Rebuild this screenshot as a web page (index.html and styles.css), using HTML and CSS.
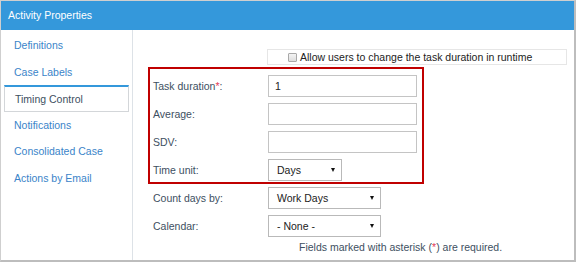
FILE: index.html
```html
<!DOCTYPE html>
<html>

<head>
    <title>Activity Properties</title>
    <meta charset="utf-8">
    <link rel="stylesheet" href="styles.css">
</head>

<body>
    <div class="panel">
        <header class="kop">Activity Properties</header>
        <div class="krop">
            <nav class="menu">
                <a href="#">Definitions</a>
                <a href="#">Case Labels</a>
                <a href="#" class="valgt">Timing Control</a>
                <a href="#">Notifications</a>
                <a href="#">Consolidated Case</a>
                <a href="#">Actions by Email</a>
            </nav>

            <section class="indhold">
                <label class="tjek">
                    <span class="boks"></span>
                    Allow users to change the task duration in runtime
                </label>

                <div class="formular">
                    <span class="etiket">Task duration<em>*</em>:</span>
                    <div class="felt">1</div>

                    <span class="etiket">Average:</span>
                    <div class="felt"></div>

                    <span class="etiket">SDV:</span>
                    <div class="felt"></div>

                    <span class="etiket">Time unit:</span>
                    <div class="valg kort"><span>Days</span><i class="pil"></i></div>

                    <span class="etiket">Count days by:</span>
                    <div class="valg"><span>Work Days</span><i class="pil"></i></div>

                    <span class="etiket">Calendar:</span>
                    <div class="valg"><span>- None -</span><i class="pil"></i></div>
                </div>

                <p class="note">Fields marked with asterisk (<em>*</em>) are required.</p>

                <!-- rød markering oven på timing felterne -->
                <div class="markering"></div>
            </section>
        </div>
    </div>
</body>

</html>
```

FILE: styles.css
```css
body {
    margin: 0;
    background-color: white;
    font-family: "Liberation Sans", Arial, sans-serif;
    font-size: 10.5px;
    color: #3d4f61;
}

.panel {
    width: 576px;
    height: 262px;
    box-sizing: border-box;
    border: 1px solid #cfcfcf;
    border-right: 2px solid #bdbdbd;
    border-bottom: 2px solid #bdbdbd;
    display: flex;
    flex-direction: column;
}

.kop {
    height: 29px;
    line-height: 29px;
    padding-left: 7px;
    background-color: #3498db;
    color: white;
    font-size: 10.5px;
}

.krop {
    flex: 1;
    display: flex;
}

.menu {
    width: 131px;
    border-right: 1px solid #dde2e7;
    padding-top: 2px;
    display: flex;
    flex-direction: column;
}

.menu a {
    height: 26.6px;
    line-height: 26.6px;
    padding-left: 13px;
    color: #3a84c9;
    text-decoration: none;
}

.menu a.valgt {
    box-sizing: border-box;
    margin: 0 3px;
    padding-left: 10px;
    line-height: 24px;
    border: 1px solid #d3d6d9;
    border-top: 2px solid #3498db;
    color: #3d4f61;
}

.indhold {
    position: relative;
    flex: 1;
    padding: 19px 0 0 20px;
}

.tjek {
    display: flex;
    align-items: center;
    gap: 3px;
    width: 300px;
    height: 16px;
    box-sizing: border-box;
    margin-left: 114px;
    margin-bottom: 10px;
    border: 1px solid #e6e6e6;
    padding-left: 20px;
    color: #222;
}

.boks {
    width: 7px;
    height: 7px;
    border: 1px solid #a9a9a9;
    border-radius: 1px;
    background: linear-gradient(#f4f4f4, #dedede);
}

.formular {
    display: grid;
    grid-template-columns: 115px auto;
    grid-auto-rows: 22px;
    row-gap: 6px;
    align-items: center;
    justify-items: start;
}

em {
    font-style: normal;
    color: #e2405a;
}

.felt {
    width: 149px;
    height: 22px;
    box-sizing: border-box;
    border: 1px solid #c4c4c4;
    padding-left: 6px;
    line-height: 20px;
    color: #222;
}

.valg {
    width: 113px;
    height: 22px;
    box-sizing: border-box;
    border: 1px solid #b9b9b9;
    padding: 0 6px 0 8px;
    display: flex;
    align-items: center;
    justify-content: space-between;
    color: #222;
}

.valg.kort {
    width: 74px;
}

.pil {
    width: 0;
    height: 0;
    border-left: 2.5px solid transparent;
    border-right: 2.5px solid transparent;
    border-top: 4px solid #111;
}

.note {
    margin: 3px 0 0 146px;
    line-height: 14px;
}

.markering {
    position: absolute;
    left: 15px;
    top: 37px;
    width: 276px;
    height: 117px;
    box-sizing: border-box;
    border: 2px solid #c00000;
}
```
